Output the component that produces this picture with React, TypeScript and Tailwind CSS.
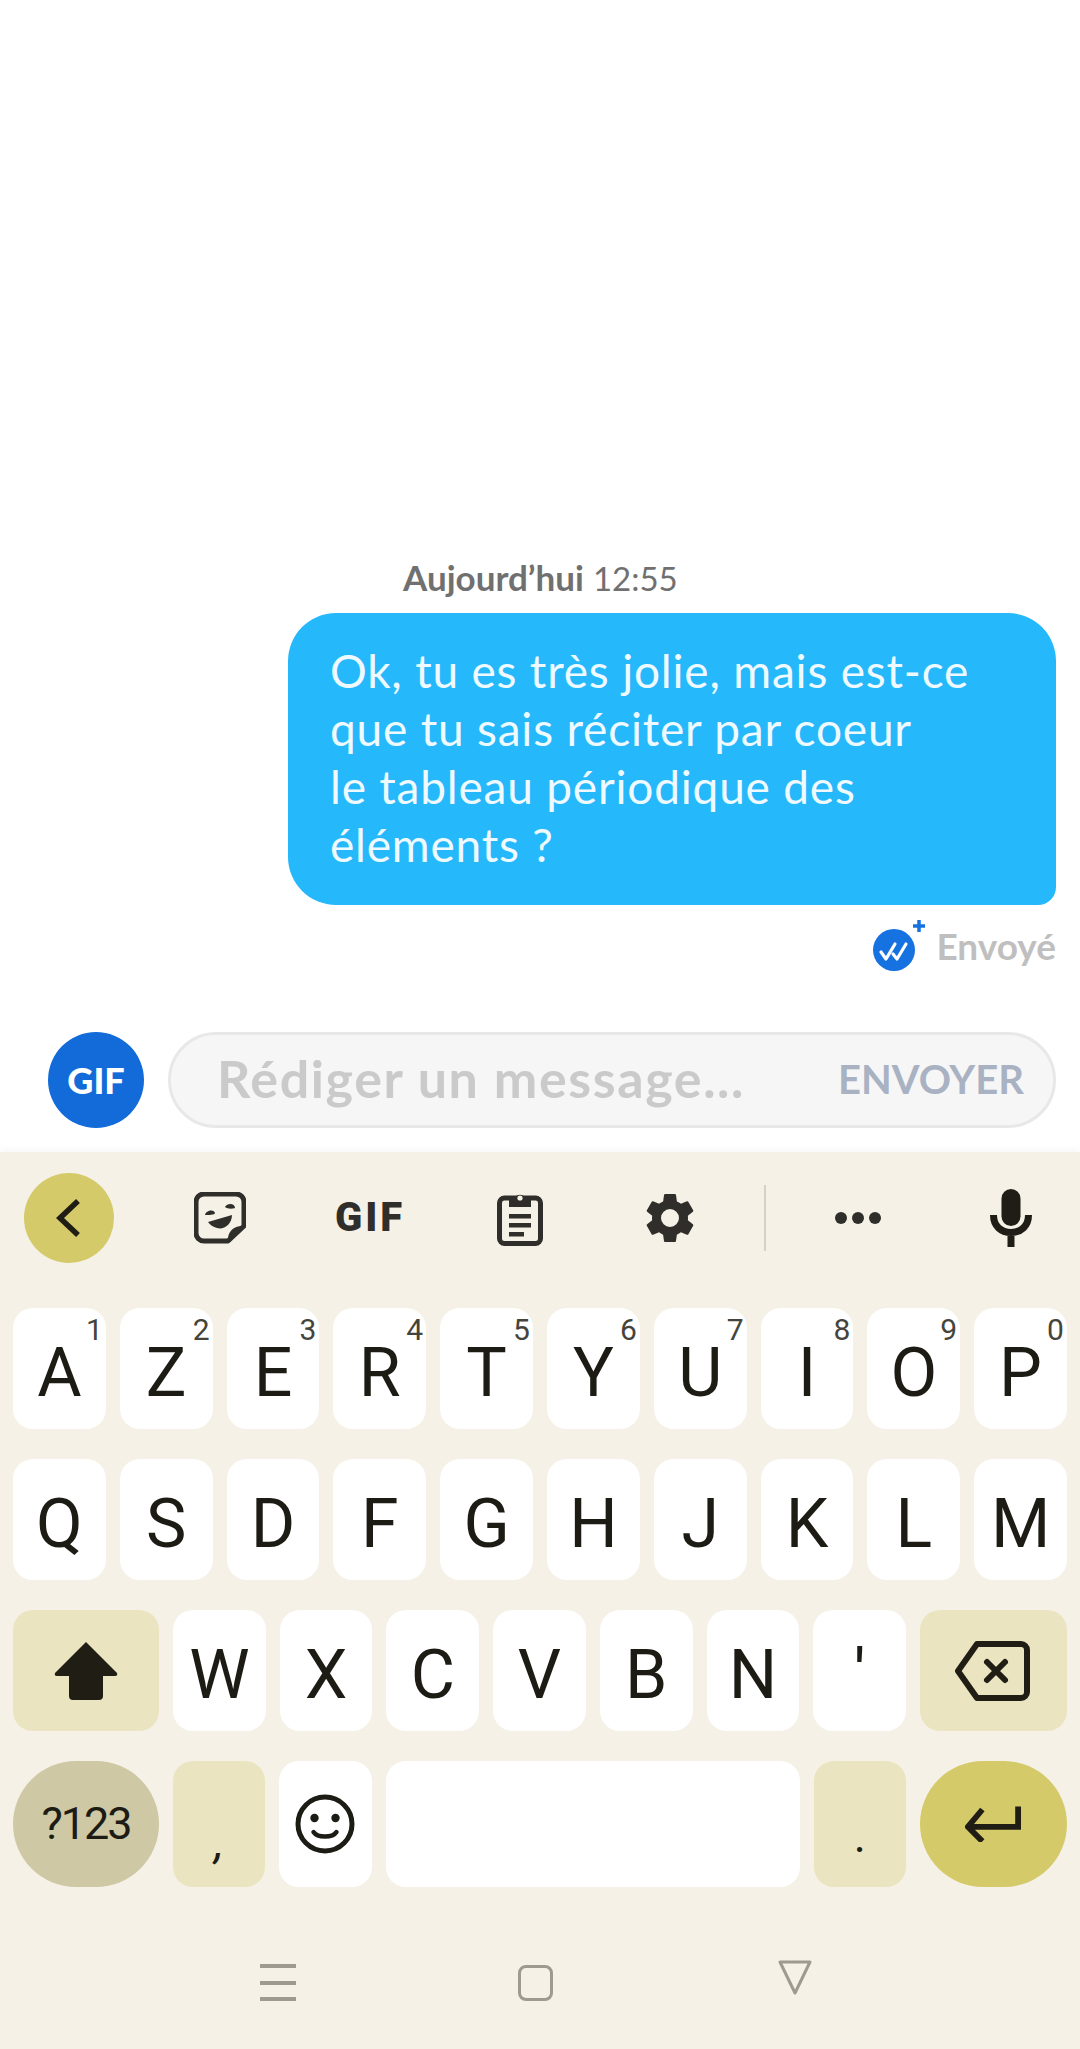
import React from 'react';

const KEY_FONT = 'font-["Roboto",sans-serif]';

const TOP_ROW: [string, string][] = [
  ['A', '1'], ['Z', '2'], ['E', '3'], ['R', '4'], ['T', '5'],
  ['Y', '6'], ['U', '7'], ['I', '8'], ['O', '9'], ['P', '0'],
];
const MIDDLE_ROW = ['Q', 'S', 'D', 'F', 'G', 'H', 'J', 'K', 'L', 'M'];
const BOTTOM_ROW = ['W', 'X', 'C', 'V', 'B', 'N', "'"];

const LetterKey: React.FC<{ label: string; hint?: string }> = ({ label, hint }) => (
  <div className={`relative flex-1 h-[121px] rounded-[20px] bg-white flex items-center justify-center text-[68px] font-[380] leading-none text-[#1c1b14] ${KEY_FONT}`}>
    <span className="pt-[8px]">{label}</span>
    {hint && <span className="absolute right-[3px] top-[7px] text-[30px] font-normal leading-none text-[#45443c]">{hint}</span>}
  </div>
);

const StickerIcon = () => (
  <svg width="52" height="52" viewBox="0 0 52 52" fill="none">
    <path d="M34 49H10a8 8 0 0 1-8-8V10a8 8 0 0 1 8-8h32a8 8 0 0 1 8 8v24z" stroke="#302e2b" strokeWidth="5" strokeLinejoin="round" />
    <path d="M50 34c-9-1-17 5-16 15z" fill="#302e2b" />
    <path d="M11 23c1-5 9-6 10-2 0 2-7 2-10 2zM31 15c2-4 10-4 10 1-2 1-8 1-10-1z" fill="#302e2b" />
    <path d="M14 30l24-7c0 9-8 15-15 13-4-1-7-3-9-6z" fill="#302e2b" />
  </svg>
);

const ClipboardIcon = () => (
  <svg width="46" height="56" viewBox="0 0 46 56" fill="none">
    <rect x="2.5" y="8" width="41" height="45.5" rx="5" stroke="#302e2b" strokeWidth="5" />
    <path d="M12 8h6a5.5 5.5 0 0 1 10 0h6v9H12z" fill="#302e2b" />
    <circle cx="23" cy="8" r="2.6" fill="#f5f1e7" />
    <path d="M12 24h22v4.5H12zM12 33h22v4.5H12zM12 42h15v4.5H12z" fill="#302e2b" />
  </svg>
);

const GearIcon = () => (
  <svg width="60" height="60" viewBox="0 0 24 24" fill="#302e2b">
    <path fillRule="evenodd" d="M19.14 12.94c.04-.3.06-.61.06-.94 0-.32-.02-.64-.07-.94l2.03-1.58a.49.49 0 0 0 .12-.61l-1.92-3.32a.49.49 0 0 0-.59-.22l-2.39.96c-.5-.38-1.03-.7-1.62-.94l-.36-2.54a.48.48 0 0 0-.48-.41h-3.84a.48.48 0 0 0-.47.41l-.36 2.54c-.59.24-1.13.57-1.62.94l-2.39-.96a.48.48 0 0 0-.59.22L2.74 8.87a.48.48 0 0 0 .12.61l2.03 1.58c-.05.3-.09.63-.09.94s.02.64.07.94l-2.03 1.58a.49.49 0 0 0-.12.61l1.92 3.32c.12.22.37.29.59.22l2.39-.96c.5.38 1.03.7 1.62.94l.36 2.54c.05.24.24.41.48.41h3.84c.24 0 .44-.17.47-.41l.36-2.54c.59-.24 1.13-.56 1.62-.94l2.39.96c.22.08.47 0 .59-.22l1.92-3.32a.48.48 0 0 0-.12-.61zM12 15.6a3.6 3.6 0 1 1 0-7.2 3.6 3.6 0 0 1 0 7.2z" />
  </svg>
);

const MicIcon = () => (
  <svg width="42" height="58" viewBox="0 0 42 58" fill="none">
    <rect x="11.5" y="0" width="19" height="37" rx="9.5" fill="#1f1d16" />
    <path d="M3.5 26c0 11 7.5 17.5 17.500 17.500S38.500 37 38.500 26M21 43v15" stroke="#1f1d16" strokeWidth="7" />
  </svg>
);

export default function App() {
  return (
    <div className={`w-[1080px] h-[2049px] bg-white flex flex-col overflow-hidden font-["Lato",sans-serif]`}>
      <div className="flex-1 flex flex-col pt-[559px]">
        <div className="h-[36px] pl-[403px] text-[35px] leading-[36px] text-[#707070] whitespace-nowrap">
          <span className="font-bold">Aujourd’hui</span> <span className="text-[33px]">12:55</span>
        </div>

        <div className="self-end mr-[24px] mt-[18px] w-[768px] h-[292px] pl-[42px] pt-[29px] rounded-[48px] rounded-br-[18px] bg-[#25b8fb] text-[46px] tracking-[0.8px] leading-[58px] text-[#eefaff] whitespace-nowrap">
          Ok, tu es très jolie, mais est-ce<br />
          que tu sais réciter par coeur<br />
          le tableau périodique des<br />
          éléments ?
        </div>

        <div className="self-end mr-[24px] mt-[21px] h-[48px] flex items-center gap-[15px]">
          <svg className="mb-[12px] overflow-visible" width="50" height="56" viewBox="0 0 50 56" fill="none">
            <circle cx="23" cy="34" r="21" fill="#1672e0" />
            <path d="M10 36l5 7 9-15M22 38l4 5 9-15" stroke="#fff" strokeWidth="3.200" strokeLinecap="round" strokeLinejoin="round" />
            <path d="M48 4v12M42 10h12" stroke="#1672e0" strokeWidth="3.500" />
          </svg>
          <span className="mb-[9px] text-[37px] leading-[44px] font-bold text-[#bfbfbf]">Envoyé</span>
        </div>

        <div className="mt-[58px] flex px-[48px] pr-[24px] gap-[24px]">
          <div className="w-[96px] h-[96px] rounded-full bg-[#126bd8] flex items-center justify-center text-[36px] font-black text-white">GIF</div>
          <div className="flex-1 h-[96px] rounded-[48px] border-[3px] border-[#e8e8e8] bg-[#f6f6f6] flex items-center justify-between pl-[46px] pr-[29px]">
            <span className="mb-[4px] text-[52px] tracking-[1.6px] leading-none font-bold text-[#cacaca] whitespace-nowrap">Rédiger un message...</span>
            <span className="mb-[2px] text-[40px] leading-none font-bold text-[#a9b2c3]">ENVOYER</span>
          </div>
        </div>
      </div>

      <div className="h-[897px] bg-[#f5f1e7] shadow-[0_-3px_6px_rgba(0,0,0,0.03)]">
        <div className="pt-[21px] flex items-center pl-[24px]">
          <div className="w-[90px] h-[90px] rounded-full bg-[#d4ca69] flex items-center justify-center">
            <svg width="26" height="38" viewBox="0 0 26 38" fill="none">
              <path d="M22 2L4 19l18 17" stroke="#1f1d14" strokeWidth="5.500" />
            </svg>
          </div>
          <div className="ml-[31px] w-[150px] flex justify-center"><StickerIcon /></div>
          <div className={`w-[150px] text-center text-[40px] leading-none font-black tracking-[3px] text-[#302e2b] ${KEY_FONT}`}>GIF</div>
          <div className="w-[150px] flex justify-center"><ClipboardIcon /></div>
          <div className="w-[150px] flex justify-center"><GearIcon /></div>
          <div className="ml-[19px] w-[2px] h-[66px] bg-[#d5d1c7]" />
          <div className="w-[184px] flex justify-center gap-[5px]">
            <span className="w-[12px] h-[12px] rounded-full bg-[#302e2b]" />
            <span className="w-[12px] h-[12px] rounded-full bg-[#302e2b]" />
            <span className="w-[12px] h-[12px] rounded-full bg-[#302e2b]" />
          </div>
          <div className="w-[120px] pl-[2px] flex justify-center"><MicIcon /></div>
        </div>

        <div className="mt-[45px] px-[13px] flex flex-col gap-[30px]">
          <div className="flex gap-[14px]">
            {TOP_ROW.map(([label, hint]) => <LetterKey key={label} label={label} hint={hint} />)}
          </div>
          <div className="flex gap-[14px]">
            {MIDDLE_ROW.map((label) => <LetterKey key={label} label={label} />)}
          </div>
          <div className="flex gap-[14px]">
            <div className="w-[146px] h-[121px] rounded-[20px] bg-[#ebe4c0] flex items-center justify-center">
              <svg width="64" height="58" viewBox="0 0 64 58" fill="#1f1d14">
                <path d="M32 0L63 31q1 3-2 3H49v20q0 4-4 4H19q-4 0-4-4V34H3q-3 0-2-3z" />
              </svg>
            </div>
            {BOTTOM_ROW.map((label) => <LetterKey key={label} label={label} />)}
            <div className="w-[147px] h-[121px] rounded-[20px] bg-[#ebe4c0] flex items-center justify-center pr-[3px]">
              <svg width="76" height="60" viewBox="0 0 76 60" fill="none" stroke="#1f1d14">
                <path d="M23 3h44a6 6 0 0 1 6 6v42a6 6 0 0 1-6 6H23L4 30z" strokeWidth="6" strokeLinejoin="round" />
                <path d="M33 21l18 18M51 21L33 39" strokeWidth="6" strokeLinecap="round" />
              </svg>
            </div>
          </div>
          <div className="flex gap-[14px]">
            <div className={`w-[146px] h-[126px] rounded-[63px] bg-[#cec8a5] flex items-center justify-center text-[45px] tracking-[-2px] text-[#1c1b14] ${KEY_FONT}`}>?123</div>
            <div className={`flex-1 h-[126px] rounded-[20px] bg-[#ebe4c0] flex items-end justify-center pb-[22px] text-[46px] italic leading-none text-[#1c1b14] ${KEY_FONT}`}>,</div>
            <div className="flex-1 h-[126px] rounded-[20px] bg-white flex items-center justify-center">
              <svg width="62" height="62" viewBox="0 0 62 62" fill="none">
                <circle cx="31" cy="31" r="27" stroke="#1c1b14" strokeWidth="5" />
                <circle cx="20.500" cy="25" r="4.200" fill="#1c1b14" />
                <circle cx="41.500" cy="25" r="4.200" fill="#1c1b14" />
                <path d="M19.500 39c4 6 19 6 23 0" stroke="#1c1b14" strokeWidth="4.500" strokeLinecap="round" />
              </svg>
            </div>
            <div className="w-[414px] h-[126px] rounded-[20px] bg-white" />
            <div className={`flex-1 h-[126px] rounded-[20px] bg-[#ebe4c0] flex items-end justify-center pb-[28px] text-[46px] leading-none text-[#1c1b14] ${KEY_FONT}`}>.</div>
            <div className="w-[147px] h-[126px] rounded-[63px] bg-[#d4ca69] flex items-center justify-center">
              <svg width="56" height="36" viewBox="0 0 58 36" fill="none" stroke="#1f1d14" strokeWidth="6">
                <path d="M55 0v21H5M18 3L3 21l15 15" />
              </svg>
            </div>
          </div>
        </div>

        <div className="mt-[73px] flex items-start pl-[260px]">
          <div className="mt-[4px] w-[36px] h-[37px] flex flex-col justify-between">
            <div className="h-[4px] bg-[#9e9a90]" />
            <div className="h-[4px] bg-[#9e9a90]" />
            <div className="h-[4px] bg-[#9e9a90]" />
          </div>
          <div className="ml-[222px] mt-[5px] w-[35px] h-[36px] rounded-[8px] border-[3px] border-[#9e9a90]" />
          <svg className="ml-[224px]" width="36" height="36" viewBox="0 0 36 36" fill="none">
            <path d="M3 2h30L18 33z" stroke="#9e9a90" strokeWidth="3" strokeLinejoin="round" />
          </svg>
        </div>
      </div>
    </div>
  );
}
